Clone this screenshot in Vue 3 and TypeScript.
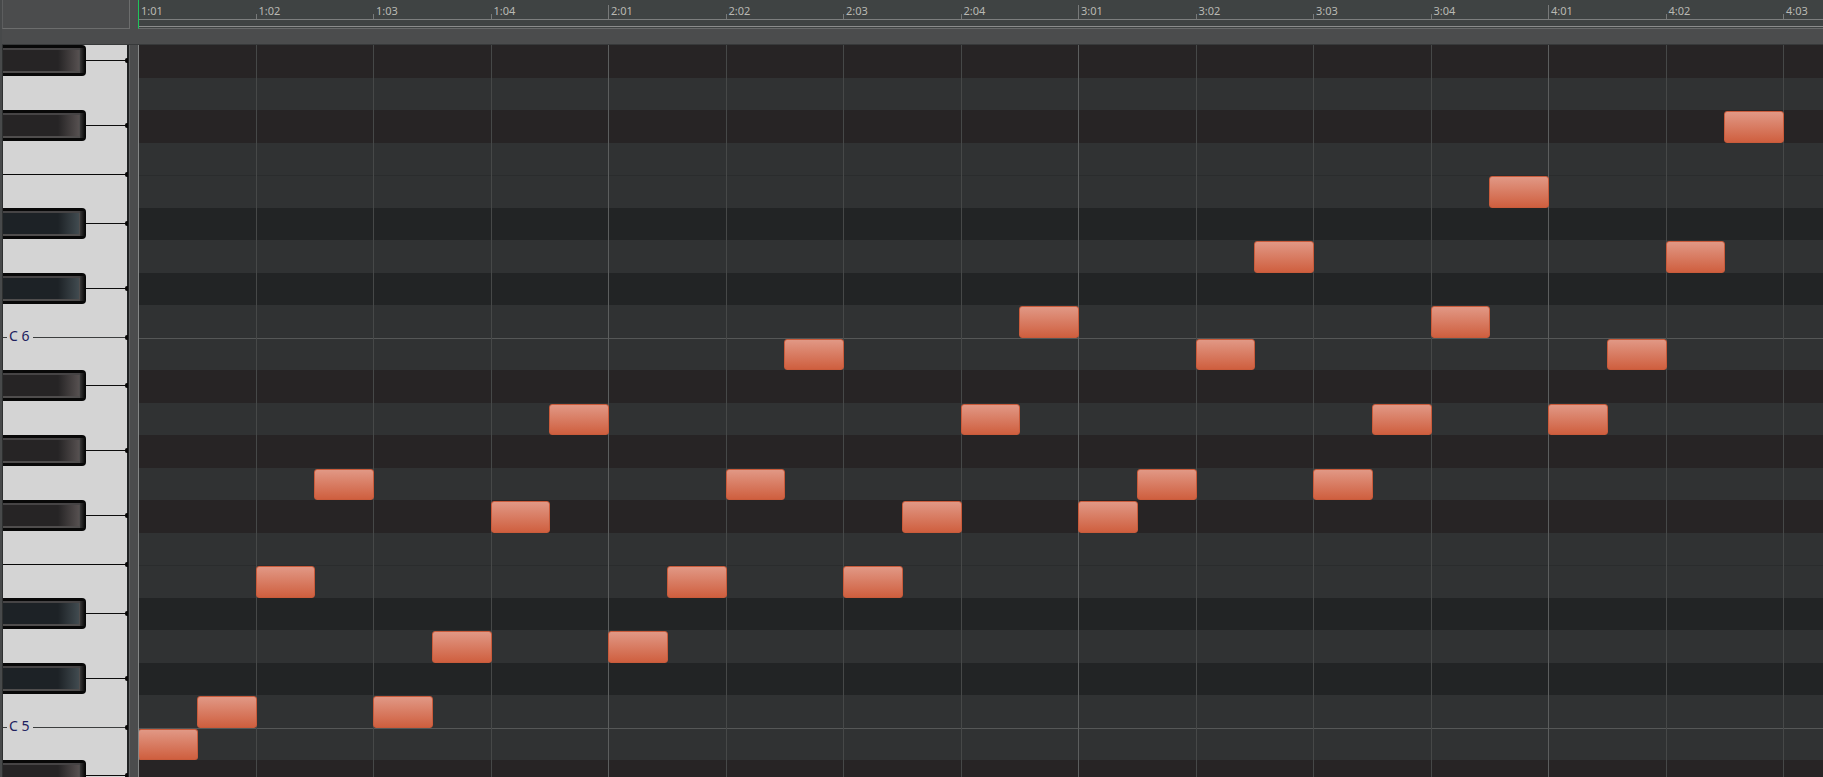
<script setup lang="ts">
import { ref } from 'vue'

type Tone = 'white' | 'warm' | 'cool'
interface Row { id: number; tone: Tone; name: string; edge: '' | 'split' | 'octave'; label: string }
interface Note { start: number; row: number }

const BEATS = 15

// Lane tones and pitch names, from the top visible lane downwards
const tones: Tone[] = [
  'warm', 'white', 'warm', 'white', 'white', 'cool', 'white', 'cool', 'white', 'white', 'warm', 'white',
  'warm', 'white', 'warm', 'white', 'white', 'cool', 'white', 'cool', 'white', 'white', 'warm', 'white',
]
const pitch = ['G#', 'G', 'F#', 'F', 'E', 'D#', 'D', 'C#', 'C', 'B', 'A#', 'A']

const rows: Row[] = tones.map((tone, id) => {
  const octave = id < 9 ? 6 : id < 21 ? 5 : 4
  const step = pitch[id % 12]
  const edge = step === 'C' ? 'octave' : step === 'F' ? 'split' : ''
  return { id, tone, name: `${step} ${octave}`, edge, label: step === 'C' ? `C ${octave}` : '' }
})

const beats = Array.from({ length: BEATS }, (_, i) => ({
  id: i,
  strong: i % 4 === 0,
  label: `${Math.floor(i / 4) + 1}:0${(i % 4) + 1}`,
}))

const noteRows = [
  21, 20, 16, 13, 20, 18, 14, 11, 18, 16, 13, 9, 16, 14,
  11, 8, 14, 13, 9, 6, 13, 11, 8, 4, 11, 9, 6, 2,
]
const notes: Note[] = noteRows.map((row, start) => ({ start, row }))
const selected = ref<number | null>(null)
</script>

<template>
  <main class="editor">
    <header class="top">
      <div class="corner"></div>
      <div class="ruler">
        <div class="beats">
          <div v-for="b in beats" :key="b.id" class="beat" :class="{ strong: b.strong }">
            <span>{{ b.label }}</span>
          </div>
        </div>
        <div class="loop"></div>
      </div>
    </header>

    <section class="body">
      <div class="keyboard">
        <div class="keys">
          <div v-for="r in rows" :key="r.id" class="slot" :class="[r.tone, r.edge]">
            <button type="button" class="key" :aria-label="r.name"></button>
            <i v-if="r.tone !== 'white'" class="mid"></i>
            <div v-if="r.edge" class="edge">
              <span v-if="r.label" class="label">{{ r.label }}</span>
            </div>
          </div>
        </div>
      </div>

      <div class="roll">
        <div class="canvas">
          <div class="lanes">
            <div v-for="r in rows" :key="r.id" class="lane" :class="[r.tone, r.edge]"></div>
          </div>
          <div class="lines">
            <div v-for="b in beats" :key="b.id" class="line" :class="{ strong: b.strong }"></div>
          </div>
          <div class="notes">
            <button
              v-for="n in notes"
              :key="n.start"
              type="button"
              class="note"
              :aria-label="rows[n.row].name"
              :aria-pressed="selected === n.start"
              :style="{ gridColumn: n.start + 1, gridRow: n.row + 1 }"
              @click="selected = n.start"
            ></button>
          </div>
        </div>
      </div>
    </section>
  </main>
</template>

<style>
body {
  margin: 0;
  background: #4b4c4d;
}
</style>

<style scoped>
.editor {
  display: flex;
  flex-direction: column;
  height: 100vh;
  overflow: hidden;
  box-sizing: border-box;
  border-left: 2px solid #47494a;
  background: #4b4c4d;
  font-family: "Noto Sans", "Open Sans", sans-serif;
}
button {
  appearance: none;
  margin: 0;
  padding: 0;
  border: 0;
}
.top {
  display: flex;
  gap: 8px;
  height: 29px;
  flex: none;
}
.corner {
  flex: none;
  box-sizing: border-box;
  width: 128px;
  border: 1px solid #6c6d6d;
  border-top: 0;
  border-left-color: #5c5d5e;
  background: #4b4c4d;
}
.ruler {
  flex: 1;
  min-width: 0;
  overflow: hidden;
  box-sizing: border-box;
  border-left: 1px solid #1fc45a;
  border-bottom: 1px solid #686a6a;
  background: #3f4343;
}
.beats {
  display: grid;
  grid-template-columns: repeat(20, 1fr);
  width: 2350px;
  height: 19px;
  margin-left: -1px;
  border-bottom: 1px solid #7c7e7e;
}
.beat {
  display: flex;
  align-items: flex-end;
  font-size: 11px;
  line-height: 16px;
  color: #b9b9b3;
}
.beat::before {
  content: "";
  width: 1px;
  height: 5px;
  margin-right: 2px;
  background: #777979;
}
.beat.strong::before {
  height: 14px;
}
.loop {
  height: 6px;
  border-bottom: 1px solid #8b8c8c;
}
.body {
  display: flex;
  gap: 8px;
  flex: 1;
  min-height: 0;
  margin-top: 15px;
  border-top: 1px solid #37393a;
}
.keyboard {
  flex: none;
  box-sizing: border-box;
  width: 128px;
  overflow: hidden;
  border-left: 1px solid #2e3030;
  border-right: 1px solid #626465;
}
.keys {
  display: grid;
  grid-template-rows: repeat(24, 1fr);
  height: 780px;
  box-sizing: border-box;
  border-right: 2px solid #1f2122;
  background: #d4d4d4;
}
.slot {
  position: relative;
  display: flex;
  align-items: flex-start;
}
.key {
  flex: 1;
  align-self: stretch;
  background: transparent;
}
.warm .key,
.cool .key {
  position: relative;
  flex: none;
  align-self: flex-start;
  box-sizing: border-box;
  width: 83px;
  height: 31px;
  border: solid #080808;
  border-width: 3px 6px 3px 0;
  border-radius: 0 4px 4px 0;
  box-shadow: inset 0 2px #464445, inset -1px -2px #4f4d4d;
}
.warm .key::after,
.cool .key::after {
  content: "";
  position: absolute;
  inset: 0 -5px 0 auto;
  width: 5px;
  background: linear-gradient(90deg, #383737, #080808);
}
.warm .key {
  background: linear-gradient(90deg, #262425 55px, #565050 76px);
}
.cool .key {
  background: linear-gradient(90deg, #1d2226 55px, #414b50 76px);
}
.mid {
  flex: 1;
  height: 1px;
  margin-top: 15px;
  background: #0d0d0d;
}
.mid::after,
.edge::after {
  content: "";
  position: absolute;
  right: -1px;
  width: 3px;
  height: 5px;
  margin-top: -2px;
  border-radius: 2px 0 0 2px;
  background: #080808;
}
.edge {
  position: absolute;
  inset: auto 0 0;
  height: 1px;
  background: #080808;
}
.octave .edge {
  z-index: 1;
  background: #3c3e3e;
}
.edge::after {
  top: 0;
}
.label {
  position: absolute;
  left: 4px;
  top: -10px;
  padding: 0 3px 0 2px;
  font-size: 14px;
  line-height: 18px;
  color: #20205e;
  background: #d4d4d4;
  white-space: nowrap;
}
.roll {
  flex: 1;
  min-width: 0;
  overflow: hidden;
  border-left: 1px solid #858787;
}
.canvas {
  display: grid;
  width: 2350px;
  height: 780px;
}
.lanes,
.lines,
.notes {
  grid-area: 1 / 1;
  display: grid;
}
.lanes,
.notes {
  grid-template-rows: repeat(24, 1fr);
}
.lane {
  background: #303233;
}
.lane.warm {
  background: #272425;
}
.lane.cool {
  background: #222425;
}
.lane.split + .lane {
  border-top: 1px solid #2a2c2d;
}
.lane.octave + .lane {
  border-top: 1px solid #555757;
}
.lines {
  grid-template-columns: repeat(20, 1fr);
}
.line {
  margin-left: -1px;
  border-left: 1px solid #464848;
}
.line.strong {
  border-left-color: #5c5e5e;
}
.notes {
  grid-template-columns: repeat(40, 1fr);
}
.note {
  margin: 1px 0 0 -1px;
  border: 1px solid #c95b3b;
  border-radius: 3px;
  background: linear-gradient(#e19885, #cf5f3f);
}
.note:first-child {
  border-left-color: #3d9aad;
}
</style>
